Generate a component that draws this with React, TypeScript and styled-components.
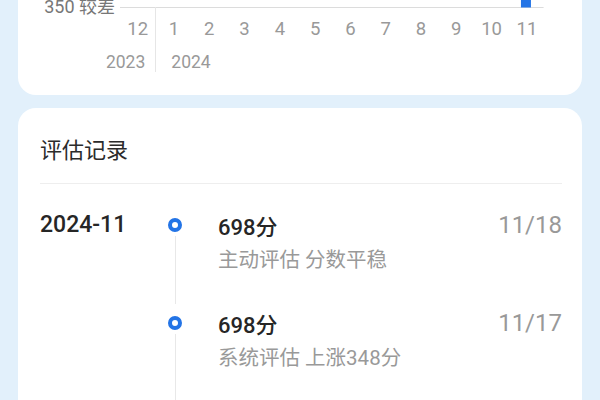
import React from "react";
import styled, { createGlobalStyle } from "styled-components";

const COL = 35.3;
const BLUE = "#2374e6";

const GlobalStyle = createGlobalStyle`
  html, body {
    margin: 0;
    padding: 0;
    background: #e2f0fb;
    font-family: Roboto, "Noto Sans CJK SC", sans-serif;
  }
  #root {
    height: 400px;
    overflow: hidden;
  }
`;

const Page = styled.div`
  display: flex;
  flex-direction: column;
  gap: 13px;
  padding: 0 18px;
`;

const Card = styled.div<{ $flatTop?: boolean }>`
  background: #fff;
  border-radius: ${(p) => (p.$flatTop ? "0 0 18px 18px" : "18px")};
  padding: ${(p) => (p.$flatTop ? "0 20px 23px 22px" : "28px 20px 0 22px")};
`;

// ---------- chart ----------

const PlotRow = styled.div`
  display: flex;
  align-items: center;
  height: 14px;
`;

const YLabel = styled.div`
  width: 80px;
  box-sizing: border-box;
  padding-right: 5px;
  text-align: right;
  font-size: 18px;
  line-height: 18px;
  color: #777;
  white-space: nowrap;
`;

const Axis = styled.div`
  display: flex;
  margin-left: 80px;
  margin-top: -7px;
`;

const AxisPart = styled.div<{ $cols: number; $divider?: boolean }>`
  display: flex;
  flex-direction: column;
  width: ${(p) => p.$cols * COL}px;
  flex: none;
  padding-top: 7px;
  border-right: ${(p) => (p.$divider ? "1px solid #e6e6e6" : "none")};
`;

const Months = styled.div`
  display: flex;
  height: 30px;
`;

const Month = styled.span`
  width: ${COL}px;
  flex: none;
  text-align: center;
  font-size: 18.5px;
  line-height: 30px;
  color: #999;
`;

const Year = styled.div<{ $align: "left" | "right" }>`
  height: 28px;
  display: flex;
  align-items: flex-end;
  justify-content: ${(p) => (p.$align === "right" ? "flex-end" : "flex-start")};
  padding: ${(p) => (p.$align === "right" ? "0 10px 0 0" : "0 0 0 15px")};
  font-size: 17.5px;
  line-height: 20px;
  color: #999;
  white-space: nowrap;
`;

// ---------- records ----------

const Title = styled.div`
  font-size: 22px;
  line-height: 30px;
  color: #2b2b2b;
`;

const Divider = styled.div`
  height: 1px;
  background: #eeeeee;
  margin-top: 17px;
  margin-bottom: 26px;
`;

const Record = styled.div`
  display: grid;
  grid-template-columns: 120px 30px 1fr;
`;

const MonthTag = styled.div`
  font-size: 23px;
  line-height: 30px;
  font-weight: 500;
  color: #262626;
`;

const Track = styled.div`
  display: flex;
  flex-direction: column;
  align-items: center;
  padding-top: 8px;
`;

const Dot = styled.div`
  width: 14px;
  height: 14px;
  box-sizing: border-box;
  border: 4px solid ${BLUE};
  border-radius: 50%;
`;

const TrackLine = styled.div`
  flex: 1;
  width: 1px;
  background: #e8e8e8;
  margin: 4px 0;
`;

const Body = styled.div`
  margin-left: 28px;
  padding-bottom: 34px;
`;

const Head = styled.div`
  display: flex;
  justify-content: space-between;
  align-items: center;
  height: 30px;
`;

const Score = styled.span`
  font-size: 22px;
  font-weight: 500;
  color: #262626;
`;

const DateText = styled.span`
  font-size: 24px;
  color: #999;
`;

const Note = styled.div`
  margin-top: 6px;
  font-size: 20.5px;
  line-height: 28px;
  color: #999;
`;

const months2024 = ["1", "2", "3", "4", "5", "6", "7", "8", "9", "10", "11"];

const records = [
  { month: "2024-11", score: "698分", date: "11/18", note: "主动评估 分数平稳" },
  { month: "", score: "698分", date: "11/17", note: "系统评估 上涨348分" },
  { month: "", score: "350分", date: "11/10", note: "系统评估 首次评估" },
];

const Plot: React.FC = () => {
  const w = COL * 12;
  const barX = 11 * COL + COL / 2 - 5;
  return (
    <svg width={w} height={14} viewBox={`0 0 ${w} 14`}>
      <line x1={0} y1={7.5} x2={w} y2={7.5} stroke="#dcdcdc" strokeWidth={1} />
      <rect x={barX} y={0} width={10} height={7.5} fill={BLUE} />
    </svg>
  );
};

export default function App() {
  return (
    <>
      <GlobalStyle />
      <Page>
        <Card $flatTop>
          <PlotRow>
            <YLabel>350 较差</YLabel>
            <Plot />
          </PlotRow>
          <Axis>
            <AxisPart $cols={1} $divider>
              <Months>
                <Month>12</Month>
              </Months>
              <Year $align="right">2023</Year>
            </AxisPart>
            <AxisPart $cols={11}>
              <Months>
                {months2024.map((m) => (
                  <Month key={m}>{m}</Month>
                ))}
              </Months>
              <Year $align="left">2024</Year>
            </AxisPart>
          </Axis>
        </Card>

        <Card>
          <Title>评估记录</Title>
          <Divider />
          {records.map((r, i) => (
            <Record key={i}>
              <MonthTag>{r.month}</MonthTag>
              <Track>
                <Dot />
                <TrackLine />
              </Track>
              <Body>
                <Head>
                  <Score>{r.score}</Score>
                  <DateText>{r.date}</DateText>
                </Head>
                <Note>{r.note}</Note>
              </Body>
            </Record>
          ))}
        </Card>
      </Page>
    </>
  );
}
